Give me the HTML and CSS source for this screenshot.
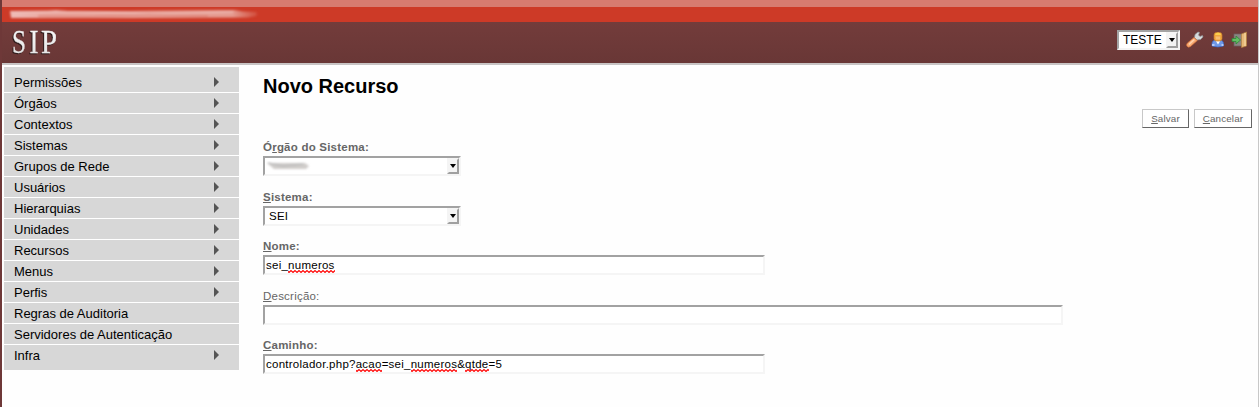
FILE: index.html
```html
<!DOCTYPE html>
<html lang="pt-BR">
<head>
<meta charset="utf-8">
<title>SIP - Novo Recurso</title>
<link rel="stylesheet" href="styles.css">
</head>
<body>
<div class="page">
  <div class="stripe"></div>
  <div class="org-bar">
    <svg class="org-smudge" width="252" height="15" viewBox="0 0 252 15">
      <defs>
        <linearGradient id="fade" x1="0" x2="1"><stop offset="0" stop-color="#eebbb6"/><stop offset=".15" stop-color="#eaa8a0"/><stop offset=".9" stop-color="#e59b90"/><stop offset="1" stop-color="#d24c3b"/></linearGradient>
        <filter id="soft" x="-5%" y="-30%" width="110%" height="160%"><feGaussianBlur stdDeviation="0.8"/></filter>
      </defs>
      <g filter="url(#soft)">
        <path d="M2 4L40 3.500L48 3L60 4L120 4L215 3L226 3L235 4.500L249 5V9L240 10.500L120 11L3 11Z" fill="url(#fade)"/>
        <path d="M5 6L70 4.500L140 7L225 5" fill="none" stroke="#f0c3bd" stroke-width="1"/>
        <path d="M30 9L80 9.500L140 8L200 9" fill="none" stroke="#dc7567" stroke-width="1"/>
      </g>
    </svg>
  </div>
  <header class="header">
    <svg class="logo" width="60" height="41" viewBox="0 0 60 41">
      <defs><linearGradient id="silver" x1="0" y1="0" x2="0" y2="1"><stop offset="0" stop-color="#fff"/><stop offset="1" stop-color="#dedede"/></linearGradient></defs>
      <g class="logo-face">
        <text x="2" y="31" textLength="14" lengthAdjust="spacingAndGlyphs">S</text>
        <text x="19.500" y="31" textLength="9" lengthAdjust="spacingAndGlyphs">I</text>
        <text x="31" y="31" textLength="16" lengthAdjust="spacingAndGlyphs">P</text>
      </g>
    </svg>
    <div class="tools">
      <div class="unit-select"><span>TESTE</span><span class="drop"></span></div>
      <svg class="icon wrench" width="18" height="17" viewBox="0 0 18 17">
        <path d="M8.500 6.500L9 3.500L12 1L13.500 1.500L12.500 4L14 5.500L16.500 4.500L17 6L14.500 8.500L11 9Z" fill="#d6dadb" stroke="#8e9496" stroke-width=".7"/>
        <path d="M8 6.500L11.300 9.500L4.500 15.500Q2 17 .8 15Q.2 13.200 1.500 12Z" fill="#f6a872" stroke="#d97238" stroke-width=".7"/>
        <path d="M3 13.500L8.300 8.500" stroke="#ffd2ad" stroke-width="1.700"/>
      </svg>
      <svg class="icon user" width="16" height="17" viewBox="0 0 16 17">
        <path d="M2 15V12Q2.500 9.500 5 9H10.500Q13 9.500 13.500 12V15Q8 17 2 15Z" fill="#6f98e8" stroke="#3a68c8" stroke-width=".7"/>
        <path d="M5.500 9.500L8 13.500L10.500 9.500Z" fill="#fff"/>
        <path d="M2 14H4.500M11.500 14H13.500" stroke="#cbdcff" stroke-width="1.500"/>
        <rect x="4" y="1.500" width="8" height="8.500" rx="2.500" fill="#f0a640" stroke="#c47a2a" stroke-width=".7"/>
        <path d="M5 3Q8 0 11 3L10.500 4H5.500Z" fill="#fbd04c"/>
        <path d="M5.500 5.500H10V8.500H6Z" fill="#f8bd70"/>
      </svg>
      <svg class="icon exit" width="18" height="18" viewBox="0 0 18 18">
        <rect x="3" y="3" width="9" height="12" fill="#8c8583" stroke="#6b6261" stroke-width=".7"/>
        <path d="M10.500 3L15.500 1V15L10.500 16.500Z" fill="#e6b878" stroke="#b4813f" stroke-width=".7"/>
        <path d="M14 2V15" stroke="#f7dca8"/>
        <path d="M1 7.500H5V5L9.500 9L5 13V10.500H1Z" fill="#62bd62" stroke="#2f8537" stroke-width=".8"/>
      </svg>
    </div>
  </header>
  <div class="body">
    <nav class="menu">
      <a class="sub">Permissões</a>
      <a class="sub">Órgãos</a>
      <a class="sub">Contextos</a>
      <a class="sub">Sistemas</a>
      <a class="sub">Grupos de Rede</a>
      <a class="sub">Usuários</a>
      <a class="sub">Hierarquias</a>
      <a class="sub">Unidades</a>
      <a class="sub">Recursos</a>
      <a class="sub">Menus</a>
      <a class="sub">Perfis</a>
      <a>Regras de Auditoria</a>
      <a>Servidores de Autenticação</a>
      <a class="sub">Infra</a>
    </nav>
    <main class="content">
      <h1>Novo Recurso</h1>
      <div class="actions">
        <button class="save"><u>S</u>alvar</button>
        <button class="cancel"><u>C</u>ancelar</button>
      </div>
      <div class="form">
        <div class="field orgao">
          <label>Ó<u>r</u>gão do Sistema:</label>
          <div class="box select">
            <svg width="48" height="14" viewBox="0 0 48 14">
              <defs><filter id="mist" x="-20%" y="-30%" width="140%" height="160%"><feGaussianBlur stdDeviation="1.200"/></filter></defs>
              <g filter="url(#mist)"><path d="M2 4H40L44 7L41 10H9Z" fill="#d0cdcb"/><path d="M3 4L18 7L38 5" fill="none" stroke="#bbb" stroke-width="1.500"/></g>
            </svg>
            <span class="drop"></span>
          </div>
        </div>
        <div class="field sistema">
          <label><u>S</u>istema:</label>
          <div class="box select"><span>SEI</span><span class="drop"></span></div>
        </div>
        <div class="field nome">
          <label><u>N</u>ome:</label>
          <div class="box"><span>sei_<span class="typo">numeros</span></span></div>
        </div>
        <div class="field descricao">
          <label class="optional"><u>D</u>escrição:</label>
          <div class="box wide"></div>
        </div>
        <div class="field caminho">
          <label><u>C</u>aminho:</label>
          <div class="box path"><span>controlador.php?<span class="typo">acao</span>=sei_<span class="typo">numeros</span>&amp;<span class="typo">qtde</span>=5</span></div>
        </div>
      </div>
    </main>
  </div>
</div>
</body>
</html>
```
FILE: styles.css
```css
* { box-sizing: border-box; }
body {
  margin: 0;
  background: #fefefe;
  font-family: "Liberation Sans", Arial, sans-serif;
  color: #000;
}
.page {
  height: 407px;
  border-left: 2px solid #6e3838;
  border-right: 1px solid #c8c8c8;
  overflow: hidden;
}
.stripe { height: 7px; background: #d77b70; }
.org-bar { height: 15px; background: #cd3a27; padding-left: 6px; }
.org-smudge { display: block; }
.header {
  height: 43px;
  display: flex;
  justify-content: space-between;
  background: linear-gradient(#733c3b, #693736);
  border-bottom: 2px solid #c8c4c4;
}
.logo { margin-left: 8px; overflow: visible; font-family: "Liberation Serif", serif; font-size: 34.5px; }
.logo-face {
  fill: url(#silver);
  stroke: #eee;
  stroke-width: .3px;
  filter: drop-shadow(-1px 1px 0 #2e1c1c);
}
.tools { display: flex; align-items: flex-start; padding: 8px 9px 0 0; }
.unit-select {
  width: 63px;
  height: 20px;
  margin-right: 6px;
  padding-left: 4px;
  display: flex;
  align-items: center;
  justify-content: space-between;
  background: #fff;
  border: 2px solid;
  border-color: #a4a4a4 #f4f4f4 #f4f4f4 #a4a4a4;
  font-size: 12px;
}
.unit-select span:first-child { margin-top: -1px; }
.icon { display: block; margin-top: 1px; }
.wrench { margin-right: 6px; }
.user { margin-right: 5px; }
.drop {
  width: 12px;
  height: 16px;
  display: flex;
  align-items: center;
  justify-content: center;
  background: #f4f4f4;
  border: 2px solid;
  border-color: #f4f4f4 #a0a0a0 #a0a0a0 #f4f4f4;
}
.drop::after {
  content: "";
  flex: none;
  border: 3.5px solid transparent;
  border-top: 4px solid #000;
  border-bottom: 0;
}
.body { display: flex; }
.menu {
  width: 235px;
  margin: 2px 0 0 2px;
  padding: 5px 0 4px;
  height: 303px;
  background: #d7d7d7;
  font-size: 13px;
}
.menu a {
  height: 21px;
  display: flex;
  align-items: center;
  justify-content: space-between;
  padding: 1px 20px 0 10px;
  border-bottom: 1px solid #fff;
}
.menu a:last-child { border-bottom: 0; padding-bottom: 1px; }
.sub::after {
  content: "";
  margin-bottom: 2px;
  border: 5px solid transparent;
  border-left-color: #555;
  border-right: 0;
}
.content { flex: 1; padding: 9px 6px 0 24px; }
h1 { margin: 0; font-size: 20px; line-height: 24px; }
.actions { display: flex; justify-content: flex-end; gap: 5px; margin-top: 11px; }
.actions button {
  height: 19px;
  padding: 0;
  background: #fff;
  border: 1px solid;
  border-color: #c8c8c8 #666 #666 #c8c8c8;
  font: 9.8px "Liberation Sans", Arial, sans-serif;
  letter-spacing: .15px;
  color: #666;
}
.actions .save { width: 47px; }
.actions .cancel { width: 58px; }
u { text-underline-offset: 1px; }
.form { padding-top: 11px; }
.field { height: 50px; }
.sistema { height: 49px; }
.descricao { height: 49px; }
label {
  display: block;
  height: 17px;
  line-height: 16px;
  font-size: 11.5px;
  letter-spacing: .22px;
  font-weight: bold;
  color: #666;
}
.optional { font-weight: normal; }
.box {
  width: 502px;
  height: 20px;
  display: flex;
  align-items: center;
  border: 2px solid;
  border-color: #a2a2a2 #f5f5f5 #f5f5f5 #a2a2a2;
  background: #fff;
  font-size: 11.5px;
  letter-spacing: .25px;
  padding-left: 1px;
}
.wide { width: 800px; }
.select { width: 198px; justify-content: space-between; padding-left: 4px; }
.select svg { margin-left: -4px; }
.typo {
  padding-bottom: 2px;
  background: url("data:image/svg+xml,%3Csvg xmlns='http://www.w3.org/2000/svg' width='4' height='3'%3E%3Cpath d='M-1 .5L1 2.500L3 .5L5 2.500' fill='none' stroke='red' stroke-width='1.100'/%3E%3C/svg%3E") repeat-x left bottom;
}
```
